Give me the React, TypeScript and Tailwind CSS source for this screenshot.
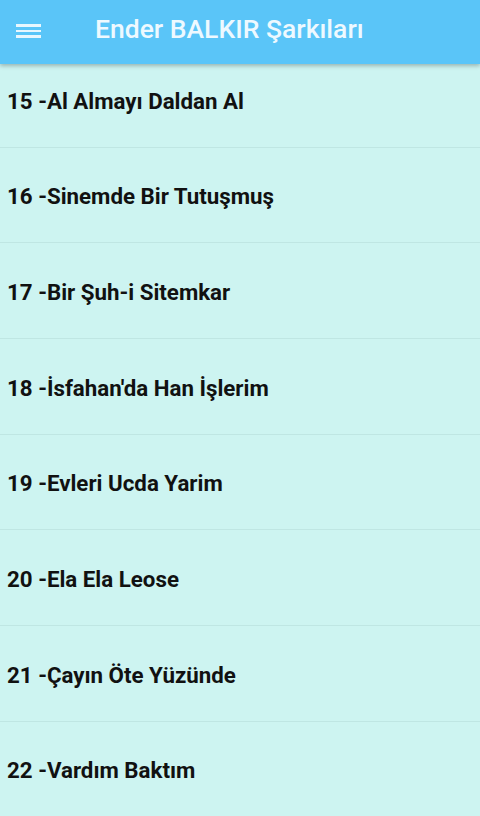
import React from "react";

const songs = [
  "15 -Al Almayı Daldan Al",
  "16 -Sinemde Bir Tutuşmuş",
  "17 -Bir Şuh-i Sitemkar",
  "18 -İsfahan'da Han İşlerim",
  "19 -Evleri Ucda Yarim",
  "20 -Ela Ela Leose",
  "21 -Çayın Öte Yüzünde",
  "22 -Vardım Baktım",
];

export default function App() {
  return (
    <div
      className="relative h-[816px] w-[480px] overflow-hidden bg-[#cdf4f1]"
      style={{ fontFamily: "Roboto, 'Noto Sans', sans-serif" }}
    >
      {/* App bar */}
      <div className="relative z-10 flex h-[64px] items-center bg-[#5ac5f8] shadow-[0_2px_4px_rgba(0,0,0,0.25)]">
        <div className="mb-[2px] ml-[16px] flex w-[25px] flex-col gap-[3px]">
          <span className="h-[2.5px] bg-[#e8f7fe]" />
          <span className="h-[2.5px] bg-[#e8f7fe]" />
          <span className="h-[2.5px] bg-[#e8f7fe]" />
        </div>
        <h1 className="mb-[6px] ml-[54px] text-[26.5px] font-medium text-[#eef9ff]">
          Ender BALKIR Şarkıları
        </h1>
      </div>

      {/* Song list */}
      <ul className="-mt-[12px]">
        {songs.map((s) => (
          <li
            key={s}
            className="flex h-[95.7px] items-center border-b border-[#bfe6e3] pl-[7px] pt-[4px]"
          >
            <span className="text-[22.3px] font-bold text-[#111]">{s}</span>
          </li>
        ))}
      </ul>
    </div>
  );
}
